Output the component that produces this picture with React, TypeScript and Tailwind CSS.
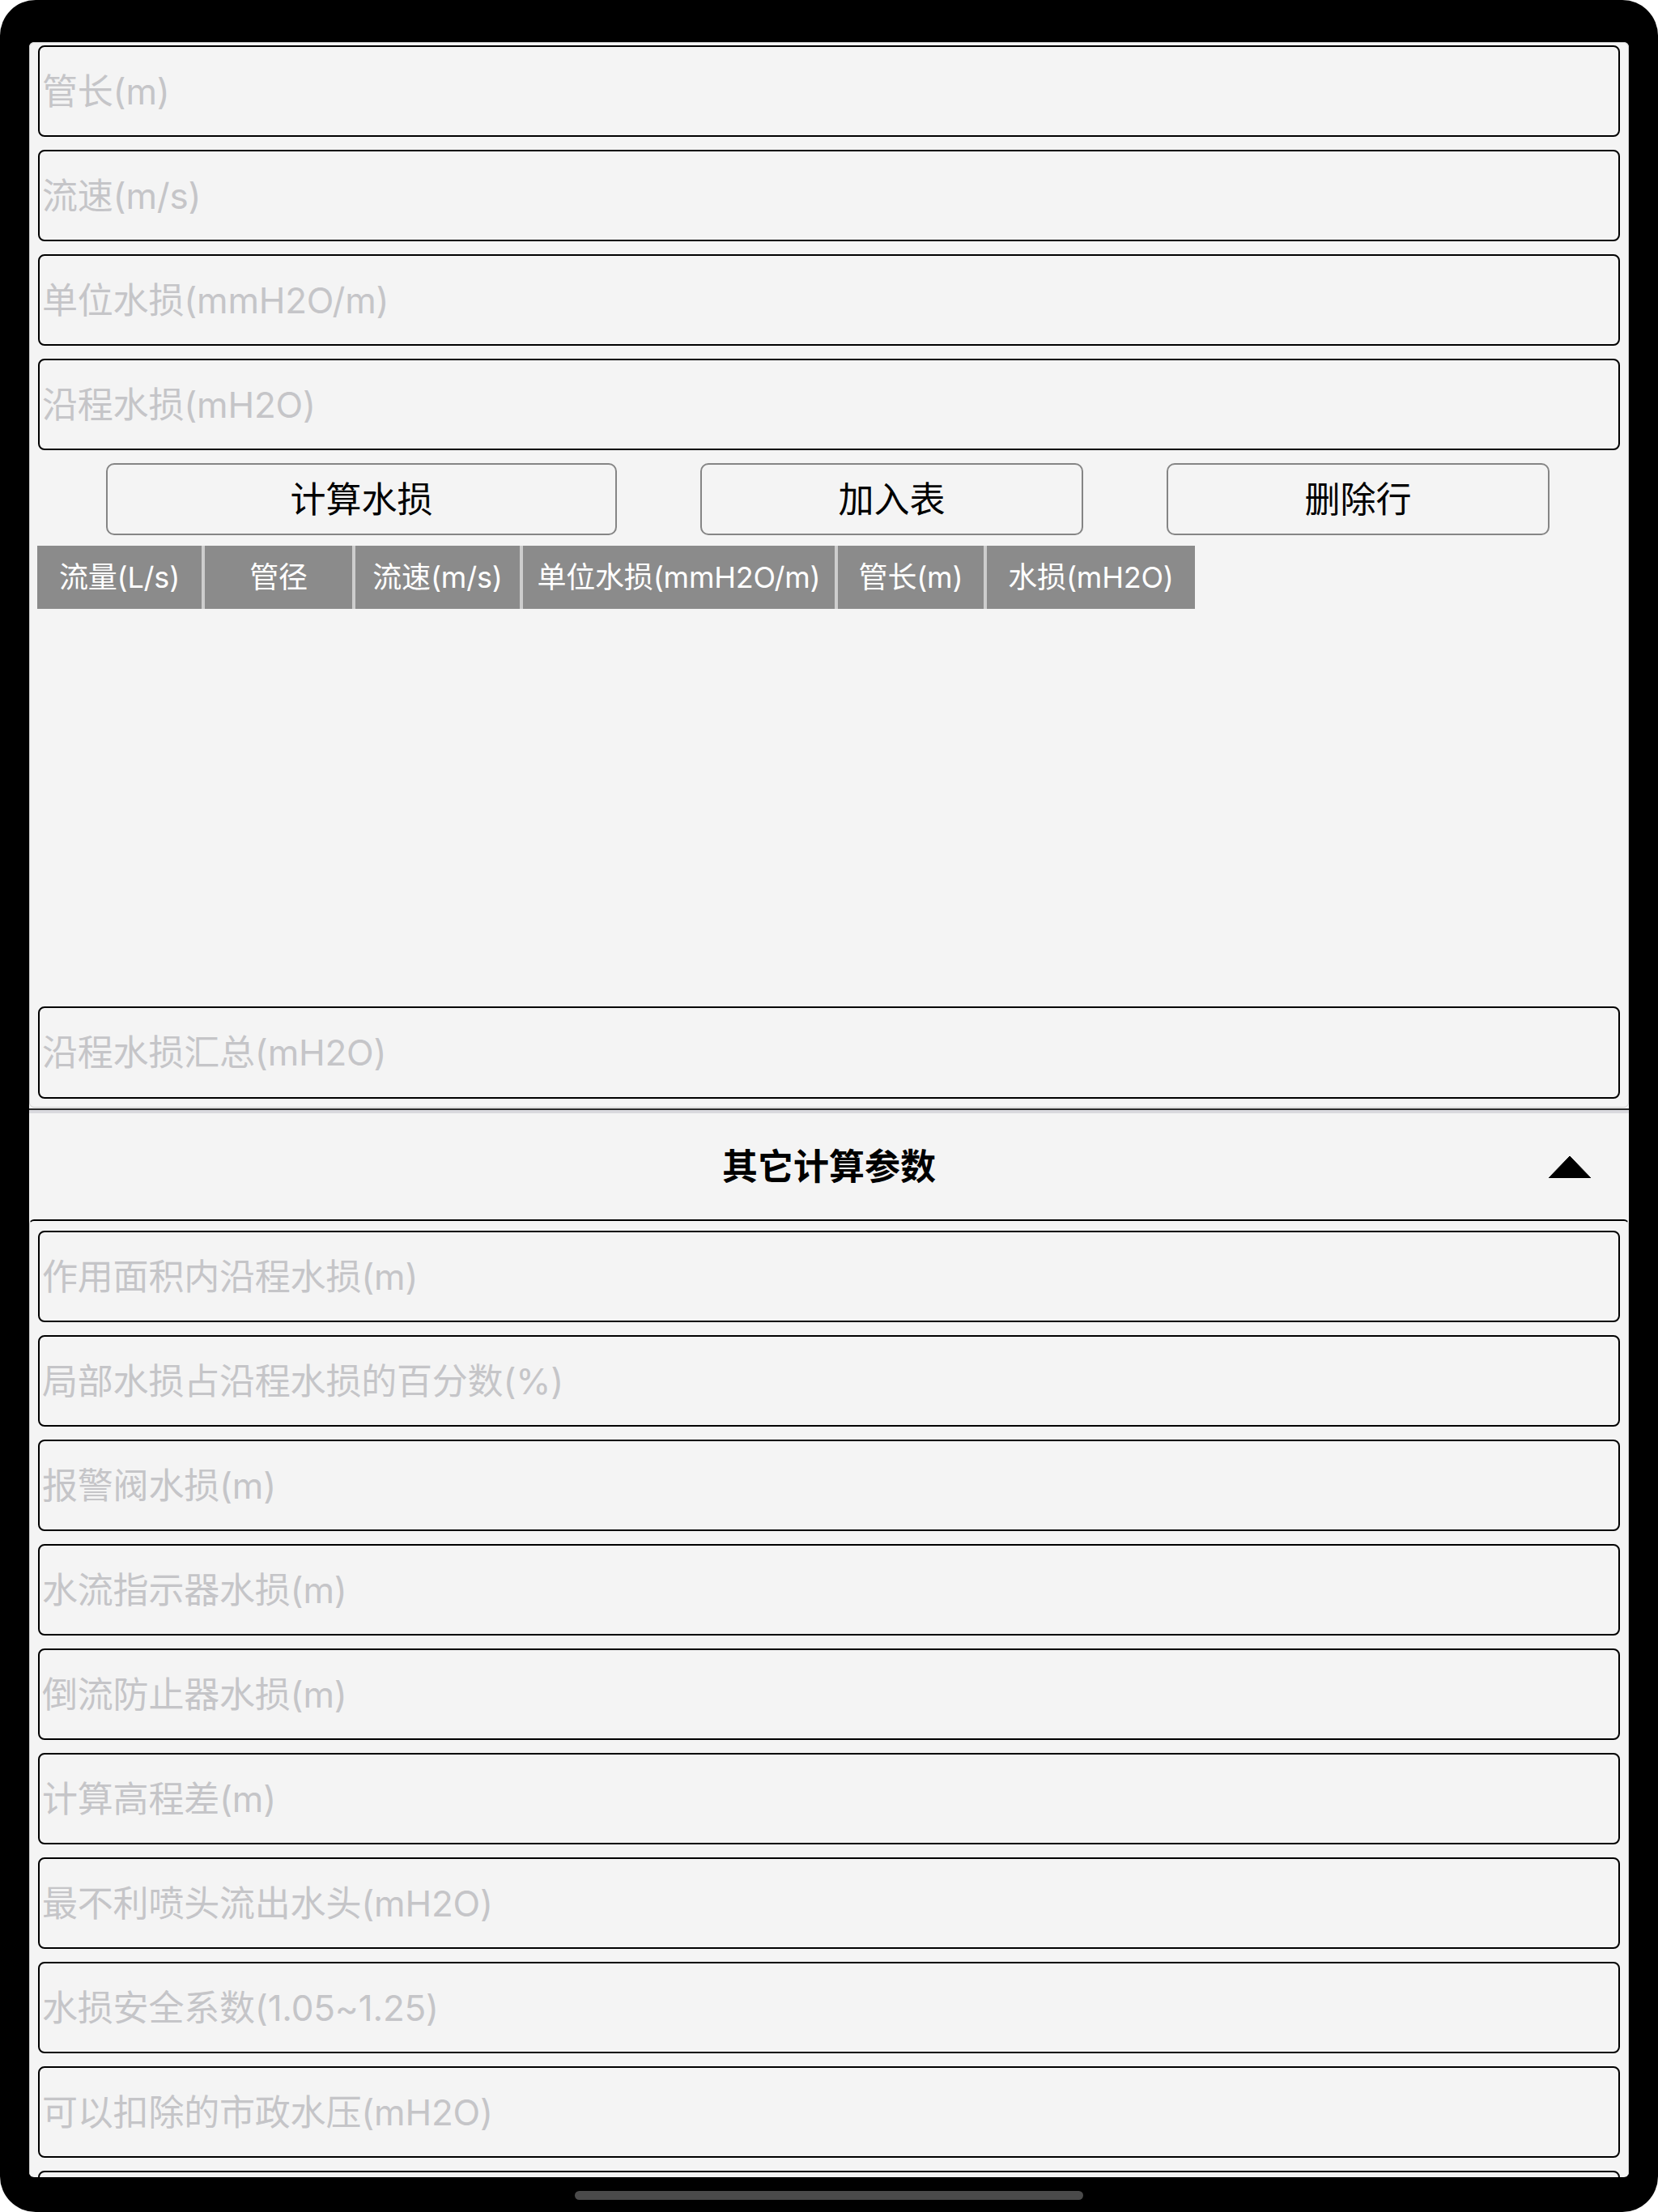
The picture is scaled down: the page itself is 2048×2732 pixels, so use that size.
import React from "react";

const FONT = "font-['Inter','Noto_Sans_CJK_SC',sans-serif]";

function Field({ label }: { label: string }) {
  return (
    <input
      readOnly
      placeholder={label}
      className={`${FONT} block w-full h-[113px] shrink-0 border-[2.5px] border-black rounded-[8px] bg-[#f4f4f4] pl-[3px] text-[44px] tracking-[-0.2px] text-black placeholder:text-[#c5c5c8] outline-none`}
    />
  );
}

const cols: { t: string; w: string }[] = [
  { t: "流量(L/s)", w: "w-[203px]" },
  { t: "管径", w: "w-[182px]" },
  { t: "流速(m/s)", w: "w-[203px]" },
  { t: "单位水损(mmH2O/m)", w: "w-[385px]" },
  { t: "管长(m)", w: "w-[180px]" },
  { t: "水损(mH2O)", w: "w-[257px]" },
];

export default function App() {
  const top = ["管长(m)", "流速(m/s)", "单位水损(mmH2O/m)", "沿程水损(mH2O)"];
  const bottom = [
    "作用面积内沿程水损(m)",
    "局部水损占沿程水损的百分数(%)",
    "报警阀水损(m)",
    "水流指示器水损(m)",
    "倒流防止器水损(m)",
    "计算高程差(m)",
    "最不利喷头流出水头(mH2O)",
    "水损安全系数(1.05~1.25)",
    "可以扣除的市政水压(mH2O)",
    "总水损(mH2O)",
  ];
  const btn =
    "h-[89px] border-2 border-[#858585] rounded-[10px] text-[44px] text-black bg-[#f4f4f4] flex items-center justify-center";
  return (
    <div className={`w-[2048px] h-[2732px] bg-white ${FONT}`}>
      <div className="w-full h-full bg-black rounded-[44px] pt-[52px] px-[36px] flex flex-col">
        <div className="h-[2637px] bg-[#f4f4f4] rounded-[6px] overflow-hidden flex flex-col">
          {/* Card 1 */}
          <div className="border border-[#cfcfcf] rounded-[6px] px-[10px] pt-[3px] pb-[10px] flex flex-col shrink-0">
            <div className="flex flex-col gap-[16px]">
              {top.map((l) => (
                <Field key={l} label={l} />
              ))}
            </div>
            <div className="mt-[16px] flex items-center pl-[84px] gap-[103px] h-[89px]">
              <button className={`w-[631px] ${btn}`}>计算水损</button>
              <button className={`w-[473px] ${btn}`}>加入表</button>
              <button className={`w-[473px] ${btn}`}>删除行</button>
            </div>
            <div className="mt-[13px] -ml-[1px] flex w-fit gap-[4px] bg-[#cdcdcd] h-[78px]">
              {cols.map((c) => (
                <div
                  key={c.t}
                  className={`${c.w} h-full bg-[#8b8b8b] text-white text-[36px] tracking-[-0.2px] flex items-center justify-center whitespace-nowrap`}
                >
                  {c.t}
                </div>
              ))}
            </div>
            <div className="h-[491px]" />
            <input
              readOnly
              placeholder="沿程水损汇总(mH2O)"
              className={`${FONT} block w-full h-[114px] border-[2.5px] border-black rounded-[8px] bg-[#f4f4f4] pl-[3px] text-[44px] tracking-[-0.2px] placeholder:text-[#c5c5c8] outline-none`}
            />
          </div>
          {/* Divider */}
          <div className="h-[2px] bg-[#2a2a2a] mt-[1px] shrink-0" />
          <div className="h-[4px] bg-[#d9d9de] shrink-0" />
          {/* Header */}
          <div className="h-[131px] shrink-0 grid grid-cols-[1fr_auto_1fr] items-center">
            <div />
            <div className="text-[44px] font-semibold text-black">其它计算参数</div>
            <div className="flex justify-end pr-[46px]">
              <svg width="54" height="28" viewBox="0 0 54 28">
                <polygon points="1,28 27,1 53,28" fill="#000" stroke="#000" strokeWidth="1" strokeLinejoin="round" />
              </svg>
            </div>
          </div>
          {/* Card 2 */}
          <div className="border-t-2 border-t-black border-x border-x-[#cfcfcf] rounded-t-[6px] px-[10px] pt-[12px] flex flex-col gap-[16px] shrink-0">
            {bottom.map((l) => (
              <Field key={l} label={l} />
            ))}
          </div>
        </div>
        <div className="h-[43px] flex justify-center pt-[17px]">
          <div className="w-[628px] h-[11px] rounded-full bg-[#4a4a4a]" />
        </div>
      </div>
    </div>
  );
}
